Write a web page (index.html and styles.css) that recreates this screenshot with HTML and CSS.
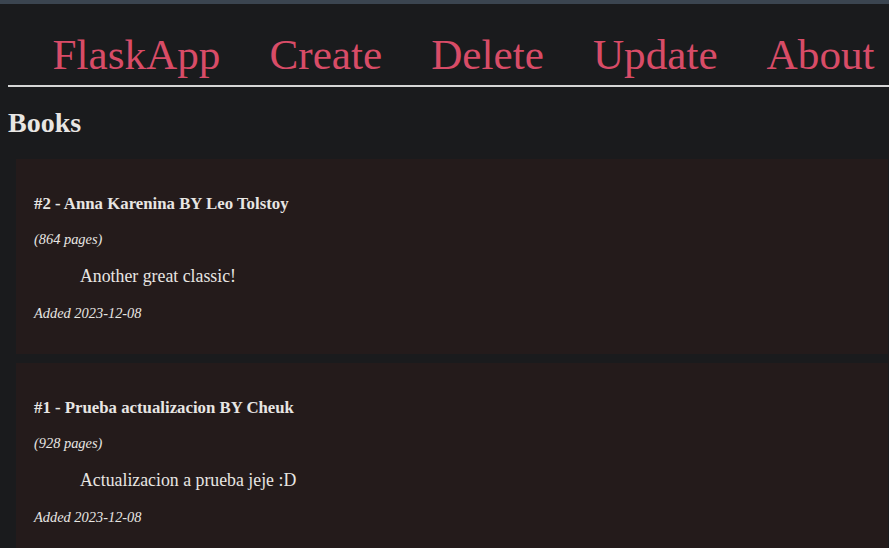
FILE: index.html
```html
<!DOCTYPE html>
<html>
<head>
<meta charset="utf-8">
<title>FlaskApp</title>
<link rel="stylesheet" href="styles.css">
</head>
<body>
<div class="topbar"></div>
<div class="page">
  <nav class="nav">
    <a href="#">FlaskApp</a>
    <a href="#">Create</a>
    <a href="#">Delete</a>
    <a href="#">Update</a>
    <a href="#">About</a>
  </nav>
  <hr class="rule">
  <h2 class="heading">Books</h2>
  <div class="book">
    <h3 class="title">#2 - Anna Karenina BY Leo Tolstoy</h3>
    <p class="meta">(864 pages)</p>
    <p class="desc">Another great classic!</p>
    <p class="meta added">Added 2023-12-08</p>
  </div>
  <div class="book">
    <h3 class="title">#1 - Prueba actualizacion BY Cheuk</h3>
    <p class="meta">(928 pages)</p>
    <p class="desc">Actualizacion a prueba jeje :D</p>
    <p class="meta added">Added 2023-12-08</p>
  </div>
</div>
</body>
</html>
```
FILE: styles.css
```css
html, body {
  margin: 0;
  padding: 0;
  background: #1a1b1d;
  color: #e8e6e3;
  font-family: "Liberation Serif", "Times New Roman", serif;
  overflow: hidden;
}
.topbar {
  height: 4px;
  background: #3b4550;
}
.page {
  padding: 0 0 0 8px;
}
.nav {
  display: flex;
  gap: 49px;
  padding: 26px 0 0 44.5px;
  font-size: 43.2px;
  line-height: 49px;
  white-space: nowrap;
}
.nav a {
  color: #d84c67;
  text-decoration: none;
}
.rule {
  margin: 6px 0 0 0;
  border: 0;
  height: 2px;
  background: #d6d6d6;
}
.heading {
  margin: 20px 0 0 0;
  font-size: 28px;
  line-height: 32px;
  font-weight: bold;
}
.book {
  margin: 20px 1px 9px 8px;
  background: #241b1b;
  padding: 36px 18px 33px 18px;
}
.book + .book {
  margin-top: 0;
}
.title {
  margin: 0;
  font-size: 16.8px;
  line-height: 18px;
  font-weight: bold;
}
.meta {
  margin: 18px 0 0 0;
  font-size: 14.4px;
  line-height: 16px;
  font-style: italic;
}
.desc {
  margin: 19px 0 0 46px;
  font-size: 17.8px;
  line-height: 20px;
}
.added {
  margin-top: 19px;
}
```
